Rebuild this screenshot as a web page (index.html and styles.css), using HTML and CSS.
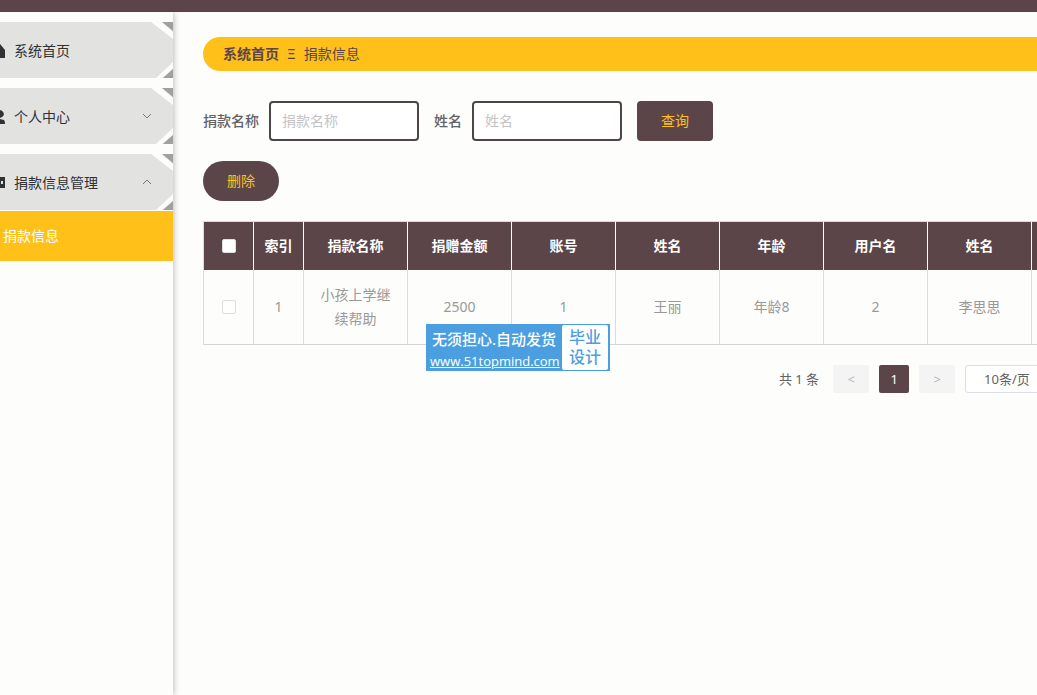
FILE: index.html
```
<!DOCTYPE html>
<html lang="zh-CN">
<head>
  <meta charset="UTF-8">
  <meta name="viewport" content="width=device-width, initial-scale=1.0">
  <title>捐款信息</title>
  <link rel="stylesheet" href="styles.css">
</head>
<body>
  <header class="topbar"></header>
  <div class="layout">
    <nav class="sidebar">
      <div class="menu-item">
        <svg class="menu-icon" viewBox="0 0 16 16"><path d="M8 0 L11 1 L16 7 V15 H11 V11 Q11 9 8 9 Q5 9 5 11 V15 H0 V7 L5 1 Z"/></svg>
        <a href="#">系统首页</a>
        <svg class="corners" viewBox="0 0 22 56"><path class="band" d="M0 0 H11 L22 10 V17 Z M5 56 H11 L22 47 V40 Z"/><path class="tip" d="M11 0 H22 V9 Z M12 56 L22 47 V56 Z"/></svg>
      </div>
      <div class="menu-item">
        <svg class="menu-icon" viewBox="0 0 16 16"><path d="M9 1 A5 4 0 0 1 13 8 L11 9 V10 L15 11 Q16 12 16 15 H0 Q0 12 1 11 L6 10 L6 8 A4 4 0 0 1 9 1 Z"/></svg>
        <a href="#">个人中心</a>
        <svg class="arrow" viewBox="0 0 12 12"><path d="M2 3 L6 7 L10 3"/></svg>
        <svg class="corners" viewBox="0 0 22 56"><path class="band" d="M0 0 H11 L22 10 V17 Z M5 56 H11 L22 47 V40 Z"/><path class="tip" d="M11 0 H22 V9 Z M12 56 L22 47 V56 Z"/></svg>
      </div>
      <div class="menu-item">
        <svg class="menu-icon" viewBox="0 0 16 16"><path fill-rule="evenodd" d="M1 2 H16 V13 H1 Z M12 6 V9 H14 V6 Z"/></svg>
        <a href="#">捐款信息管理</a>
        <svg class="arrow" viewBox="0 0 12 12"><path d="M2 7 L6 3 L10 7"/></svg>
        <svg class="corners" viewBox="0 0 22 56"><path class="band" d="M0 0 H11 L22 10 V17 Z M5 56 H11 L22 47 V40 Z"/><path class="tip" d="M11 0 H22 V9 Z M12 56 L22 47 V56 Z"/></svg>
      </div>
      <a class="submenu-item" href="#">捐款信息</a>
    </nav>

    <main class="content">
      <div class="breadcrumb">
        <a href="#">系统首页</a>
        <span class="separator">Ξ</span>
        <span>捐款信息</span>
      </div>

      <form class="search">
        <div class="field">
          <label for="title">捐款名称</label>
          <input id="title" type="text" placeholder="捐款名称">
        </div>
        <div class="field">
          <label for="name">姓名</label>
          <input id="name" type="text" placeholder="姓名">
        </div>
        <button class="btn" type="button">查询</button>
      </form>

      <button class="btn btn-round" type="button">删除</button>

      <table class="data">
        <colgroup>
          <col class="narrow"><col class="narrow">
          <col class="wide"><col class="wide"><col class="wide"><col class="wide">
          <col class="wide"><col class="wide"><col class="wide"><col>
        </colgroup>
        <thead>
          <tr>
            <th><input type="checkbox" aria-label="全选"></th>
            <th>索引</th>
            <th>捐款名称</th>
            <th>捐赠金额</th>
            <th>账号</th>
            <th>姓名</th>
            <th>年龄</th>
            <th>用户名</th>
            <th>姓名</th>
            <th></th>
          </tr>
        </thead>
        <tbody>
          <tr>
            <td><input type="checkbox" aria-label="选择"></td>
            <td>1</td>
            <td>小孩上学继续帮助</td>
            <td>2500</td>
            <td>1</td>
            <td>王丽</td>
            <td>年龄8</td>
            <td>2</td>
            <td>李思思</td>
            <td></td>
          </tr>
        </tbody>
      </table>

      <div class="pagination">
        <span class="total">共 1 条</span>
        <button class="page-arrow" type="button" aria-label="上一页" disabled>&lt;</button>
        <button class="page-number" type="button">1</button>
        <button class="page-arrow" type="button" aria-label="下一页" disabled>&gt;</button>
        <select class="page-size" aria-label="每页条数">
          <option>10条/页</option>
        </select>
      </div>
    </main>
  </div>

  <div class="watermark">
    <div class="mark-text">
      <span>无须担心.自动发货</span>
      <a href="#">www.51topmind.com</a>
    </div>
    <div class="mark-box">毕业设计</div>
  </div>
</body>
</html>
```
FILE: styles.css
```
* {
  box-sizing: border-box;
}

body {
  margin: 0;
  height: 100vh;
  display: flex;
  flex-direction: column;
  overflow: hidden;
  background: #fdfdfc;
  color: #606266;
  font-family: "Noto Sans", "Noto Sans CJK SC", sans-serif;
  font-size: 14px;
  line-height: 24px;
}

a {
  color: inherit;
  text-decoration: none;
}

button,
input,
select {
  font-family: inherit;
  font-size: 14px;
}

.topbar {
  flex: none;
  height: 12px;
  background: #5c4549;
  border-bottom: 1px solid #514446;
}

.layout {
  flex: 1;
  display: flex;
  overflow: hidden;
}

/* sidebar */
.sidebar {
  flex: none;
  width: 210px;
  margin-left: -37px;
  padding-top: 10px;
  box-shadow: 1px 0 6px rgba(0, 0, 0, 0.25);
}

.menu-item {
  position: relative;
  display: flex;
  align-items: center;
  height: 56px;
  margin-bottom: 10px;
  padding: 2px 20px 0 26px;
  background: #e2e2e1;
  color: #303133;
}

.menu-item:nth-of-type(3) {
  margin-bottom: 1px;
}

.menu-icon {
  width: 16px;
  height: 16px;
  margin-right: 9px;
  fill: #303133;
}

.arrow {
  width: 12px;
  height: 12px;
  margin-left: auto;
  fill: none;
  stroke: #77787a;
}

.corners {
  position: absolute;
  top: 0;
  right: 0;
  width: 22px;
  height: 56px;
}

.band {
  fill: #fdfdfc;
}

.tip {
  fill: #a0a0a0;
}

.submenu-item {
  display: block;
  height: 50px;
  padding-left: 40px;
  background: #ffc01a;
  color: #fff;
  line-height: 50px;
}

/* content */
.content {
  flex: 1;
  min-width: 0;
  padding: 25px 0 0 30px;
  overflow: hidden;
}

.breadcrumb {
  display: flex;
  align-items: center;
  gap: 8px;
  height: 34px;
  padding-left: 20px;
  border-radius: 17px 0 0 17px;
  background: #ffc01a;
  color: #5c4549;
}

.breadcrumb a {
  font-weight: bold;
}

.search {
  display: flex;
  gap: 15px;
  margin: 30px 0 20px;
}

.field {
  display: flex;
  align-items: center;
  gap: 10px;
}

.field label {
  font-weight: 500;
}

.field input {
  width: 150px;
  height: 40px;
  padding: 0 11px 2px;
  border: 2px solid #4c4648;
  border-radius: 4px;
  background: #fff;
}

.field input::placeholder {
  color: #c4c4c6;
}

.btn {
  width: 76px;
  height: 40px;
  padding: 0 0 2px;
  border: 0;
  border-radius: 4px;
  background: #5c4549;
  color: #ffc01a;
}

.btn-round {
  display: block;
  border-radius: 20px;
}

/* table */
.data {
  width: 1438px;
  margin-top: 20px;
  table-layout: fixed;
  border-collapse: separate;
  border-spacing: 0;
  border-top: 1px solid #dcdcdc;
  border-left: 1px solid #dcdcdc;
  text-align: center;
}

.narrow {
  width: 50px;
}

.wide {
  width: 104px;
}

.data th {
  height: 48px;
  padding: 0;
  border-right: 1px solid #fff;
  background: #5c4549;
  color: #fff;
}

.data td {
  padding: 13px 10px;
  border-right: 1px solid #dcdcdc;
  border-bottom: 1px solid #d4d4d4;
  color: #999;
}

.data input {
  appearance: none;
  display: block;
  width: 14px;
  height: 14px;
  margin: 0 auto;
  border: 1px solid #dfdfe0;
  border-radius: 2px;
  background: #fff;
}

/* pagination */
.pagination {
  display: flex;
  justify-content: center;
  align-items: center;
  gap: 10px;
  width: 1438px;
  margin-top: 20px;
  font-size: 13px;
}

.total {
  margin-right: 4px;
}

.page-arrow,
.page-number {
  width: 36px;
  height: 28px;
  padding: 0;
  border: 0;
  border-radius: 2px;
  background: #f4f4f5;
  color: #b4b6ba;
  font-size: 13px;
}

.page-number {
  width: 30px;
  background: #5c4549;
  color: #fff;
}

.page-size {
  appearance: none;
  width: 100px;
  height: 28px;
  padding: 0 18px;
  border: 1px solid #dcdfe6;
  border-radius: 3px;
  background: #fff;
  color: #606266;
  font-size: 13px;
}

/* floating mark over the page */
.watermark {
  position: absolute;
  top: 324px;
  left: 426px;
  display: flex;
  width: 184px;
  height: 47px;
  padding: 1px 2px 1px 4px;
  background: #4b9fe1;
}

.mark-text {
  display: flex;
  flex: 1;
  flex-direction: column;
  align-items: flex-start;
  min-width: 0;
  color: #fff;
  font-size: 15px;
  font-weight: 500;
  line-height: 28px;
  white-space: nowrap;
}

.mark-text span {
  padding-left: 2px;
}

.mark-text a {
  font-family: "Open Sans", "Noto Sans", sans-serif;
  font-size: 13px;
  font-weight: 500;
  line-height: 16px;
  text-decoration: underline;
}

.mark-box {
  flex: none;
  width: 46px;
  padding: 2px 7px;
  border-radius: 2px;
  background: #fff;
  color: #4b9fe1;
  font-size: 16px;
  font-weight: 500;
  line-height: 20px;
}
```
